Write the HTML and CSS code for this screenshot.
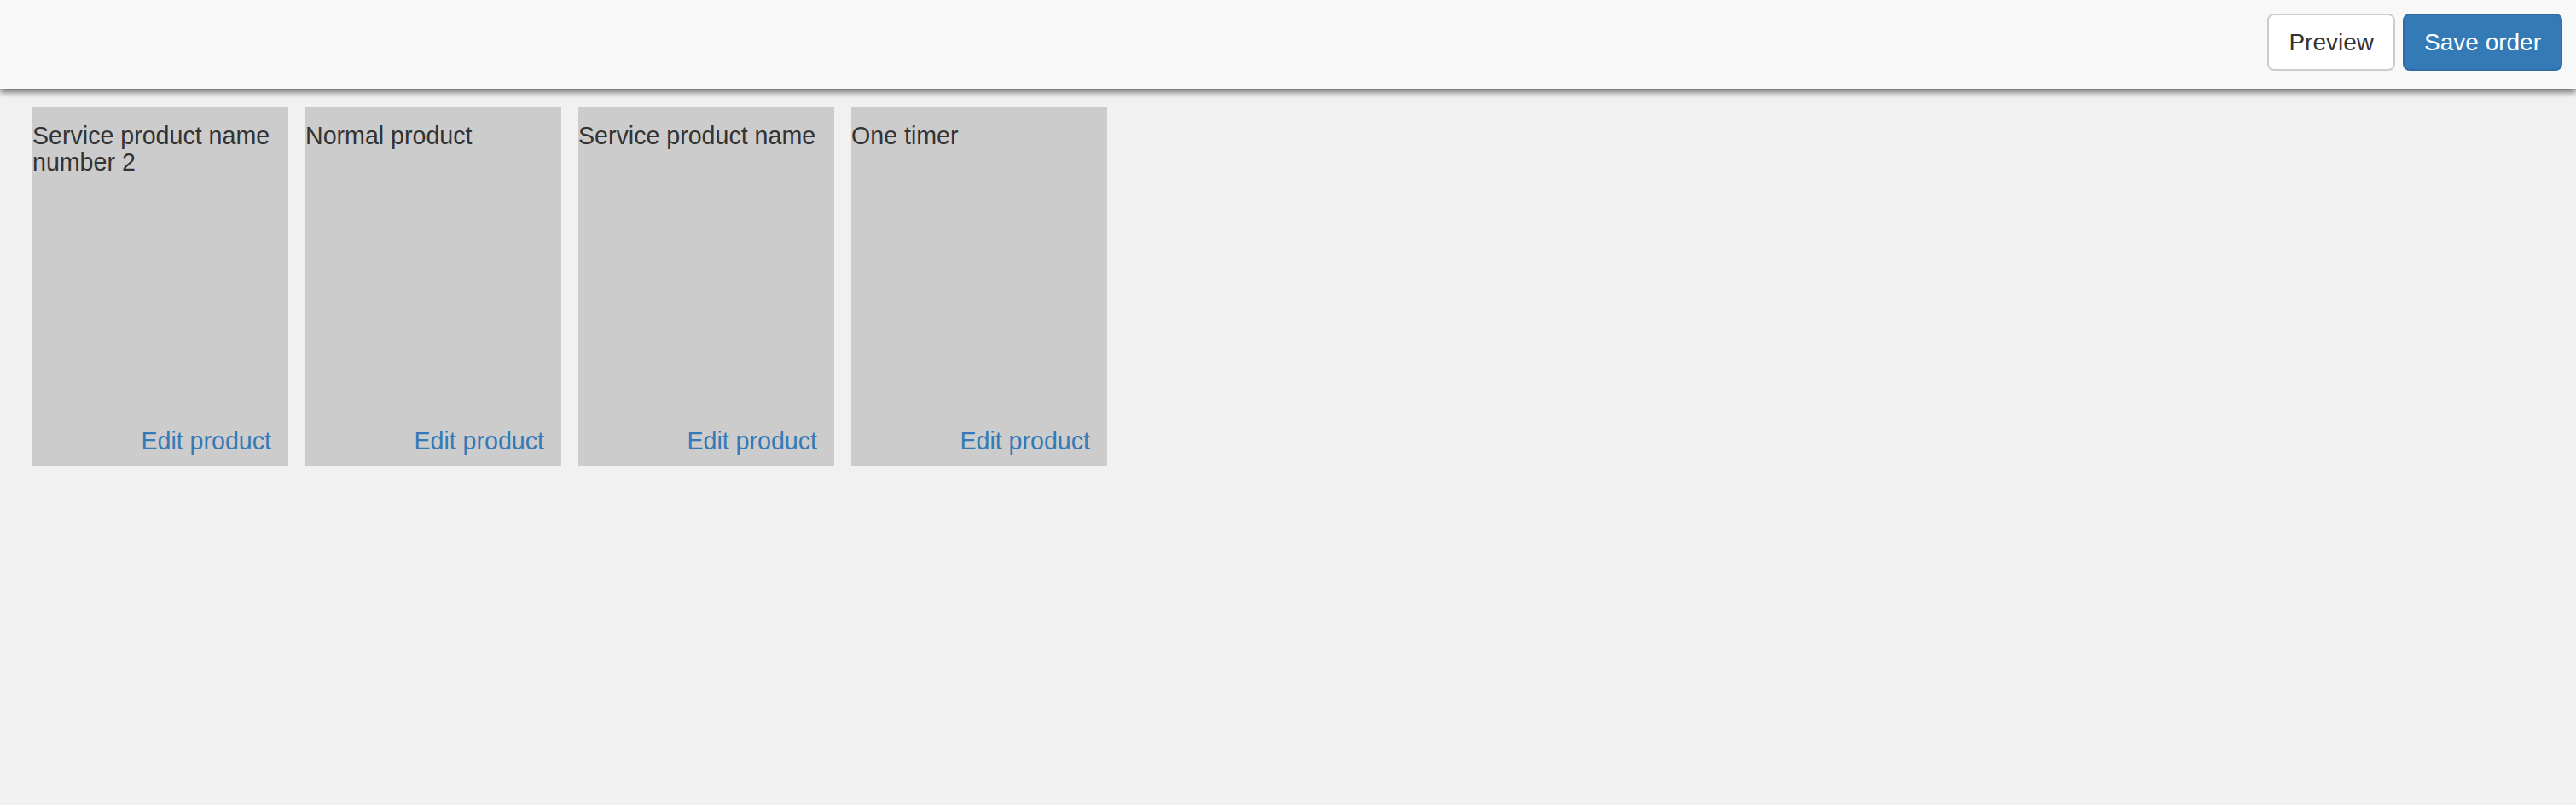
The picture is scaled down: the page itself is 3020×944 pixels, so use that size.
FILE: index.html
```html
<!DOCTYPE html>
<html lang="en">
<head>
<meta charset="utf-8">
<title>Product order</title>
<link rel="stylesheet" href="styles.css">
</head>
<body>
<header class="topbar">
  <div class="actions">
    <button class="btn btn-default" type="button">Preview</button>
    <button class="btn btn-primary" type="button">Save order</button>
  </div>
</header>
<main class="products">
  <div class="card">
    <div class="card-title">Service product name number 2</div>
    <a class="card-link" href="#">Edit product</a>
  </div>
  <div class="card">
    <div class="card-title">Normal product</div>
    <a class="card-link" href="#">Edit product</a>
  </div>
  <div class="card">
    <div class="card-title">Service product name</div>
    <a class="card-link" href="#">Edit product</a>
  </div>
  <div class="card">
    <div class="card-title">One timer</div>
    <a class="card-link" href="#">Edit product</a>
  </div>
</main>
</body>
</html>
```
FILE: styles.css
```css
html, body {
  margin: 0;
  padding: 0;
}
body {
  background: #f1f1f1;
  color: #333;
  font-family: "Liberation Sans", Arial, Helvetica, sans-serif;
  font-size: 28px;
  line-height: 40px;
  min-height: 944px;
}
.topbar {
  height: 104px;
  background: #f8f8f8;
  box-shadow: 0 4px 7px rgba(0, 0, 0, 0.55);
  display: flex;
  justify-content: flex-end;
  align-items: flex-start;
  padding: 16px 16px 0 0;
  box-sizing: border-box;
  position: relative;
  z-index: 1;
}
.actions {
  display: flex;
  gap: 9px;
}
.btn {
  font-family: "Liberation Sans", Arial, Helvetica, sans-serif;
  font-size: 28px;
  line-height: 39px;
  padding: 12px 23px;
  border: 2px solid;
  border-radius: 8px;
  cursor: pointer;
  margin: 0;
}
.btn-default {
  background: #fff;
  border-color: #ccc;
  color: #333;
}
.btn-primary {
  background: #337ab7;
  border-color: #2e6da4;
  color: #fff;
}
.products {
  display: flex;
  gap: 20px;
  padding: 22px 0 0 38px;
}
.card {
  width: 300px;
  height: 420px;
  background: #cccccc;
  display: flex;
  flex-direction: column;
  justify-content: space-between;
  box-sizing: border-box;
  font-size: 28.6px;
}
.card-title {
  margin-top: 18px;
  line-height: 30.8px;
}
.card-link {
  align-self: flex-end;
  color: #337ab7;
  text-decoration: none;
  line-height: 40px;
  padding: 0 20px 9px 0;
}
```
